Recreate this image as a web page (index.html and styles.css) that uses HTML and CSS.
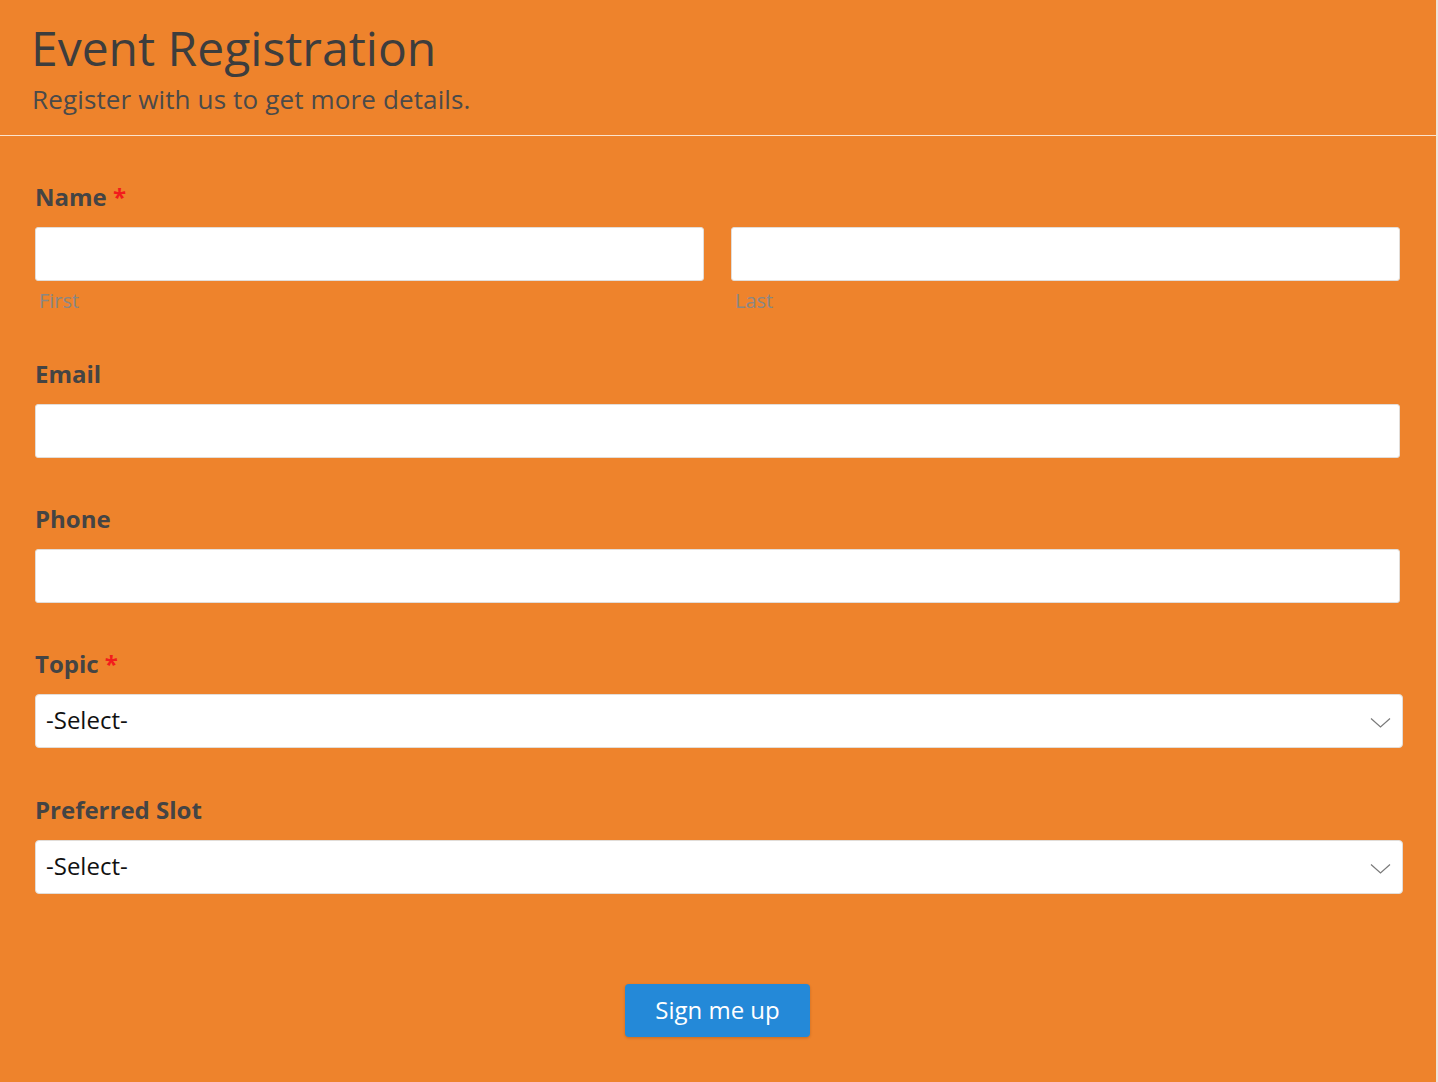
FILE: index.html
```html
<!DOCTYPE html>
<html lang="en">
<head>
<meta charset="utf-8">
<title>Event Registration</title>
<link rel="stylesheet" href="styles.css">
</head>
<body>
<div class="page">
  <header class="header">
    <h1 class="title">Event Registration</h1>
    <p class="subtitle">Register with us to get more details.</p>
  </header>
  <form class="form">
    <div class="field">
      <label class="label">Name <span class="req">*</span></label>
      <div class="name-row">
        <div class="name-col">
          <input class="input" type="text">
          <span class="sublabel">First</span>
        </div>
        <div class="name-col">
          <input class="input" type="text">
          <span class="sublabel">Last</span>
        </div>
      </div>
    </div>
    <div class="field">
      <label class="label">Email</label>
      <input class="input" type="text">
    </div>
    <div class="field">
      <label class="label">Phone</label>
      <input class="input" type="text">
    </div>
    <div class="field field-select">
      <label class="label">Topic <span class="req">*</span></label>
      <div class="select">
        <span class="select-text">-Select-</span>
        <svg class="chevron" width="21" height="11" viewBox="0 0 21 11"><path d="M1 1.5 L10.5 10 L20 1.5" fill="none" stroke="#7a7a7a" stroke-width="1.2"/></svg>
      </div>
    </div>
    <div class="field">
      <label class="label">Preferred Slot</label>
      <div class="select">
        <span class="select-text">-Select-</span>
        <svg class="chevron" width="21" height="11" viewBox="0 0 21 11"><path d="M1 1.5 L10.5 10 L20 1.5" fill="none" stroke="#7a7a7a" stroke-width="1.2"/></svg>
      </div>
    </div>
    <div class="actions">
      <button class="btn" type="button">Sign me up</button>
    </div>
  </form>
</div>
</body>
</html>
```

FILE: styles.css
```css
html, body {
  margin: 0;
  padding: 0;
  background: #efe4d9;
}
body {
  font-family: "Open Sans", "Liberation Sans", sans-serif;
  color: #3f3f3f;
}
.page {
  width: 1436px;
  min-height: 1082px;
  background: #ee832c;
  box-sizing: border-box;
}
.header {
  padding: 20px 0 21px 31px;
  border-bottom: 1px solid #fbe3cc;
}
.title {
  margin: 0;
  font-size: 48px;
  font-weight: 400;
  line-height: 55px;
  color: #3d3d3d;
}
.subtitle {
  margin: 9px 0 0;
  padding-left: 1px;
  font-size: 26px;
  letter-spacing: 0.14px;
  line-height: 30px;
  color: #4a4a4a;
}
.form {
  padding: 46px 35px 0 35px;
}
.field {
  margin-bottom: 46px;
}
.field-select {
  margin-bottom: 47px;
}
.label {
  display: block;
  font-size: 24px;
  font-weight: 700;
  line-height: 30px;
  margin-bottom: 15px;
  color: #444;
}
.req {
  color: #f21c1c;
  font-weight: 700;
}
.name-row {
  display: flex;
  gap: 27px;
  width: 1365px;
}
.name-col {
  flex: 1;
  display: flex;
  flex-direction: column;
}
.input {
  display: block;
  box-sizing: border-box;
  width: 1365px;
  height: 54px;
  margin: 0;
  background: #fff;
  border: 1px solid #e2ddd8;
  border-radius: 3px;
  outline: none;
}
.name-col .input {
  width: 100%;
}
.sublabel {
  display: block;
  margin-top: 8px;
  padding-left: 4px;
  font-size: 20px;
  line-height: 24px;
  color: #8a8784;
}
.select {
  box-sizing: border-box;
  width: 1368px;
  height: 54px;
  background: #fff;
  border: 1px solid #e2ddd8;
  border-radius: 4px;
  display: flex;
  align-items: center;
  justify-content: space-between;
  padding: 0 11px 0 10px;
}
.select-text {
  font-size: 24px;
  line-height: 30px;
  color: #111;
  margin-top: -3px;
}
.chevron {
  display: block;
  margin-top: 2px;
}
.actions {
  display: flex;
  justify-content: center;
  padding-top: 44px;
  padding-right: 1px;
}
.btn {
  width: 185px;
  height: 53px;
  background: #2489d8;
  color: #fff;
  border: none;
  border-radius: 4px;
  font-family: "Open Sans", "Liberation Sans", sans-serif;
  font-size: 24px;
  line-height: 30px;
  padding: 0 0 2px;
  box-shadow: 0 1px 3px rgba(0, 0, 0, 0.18);
}
```
